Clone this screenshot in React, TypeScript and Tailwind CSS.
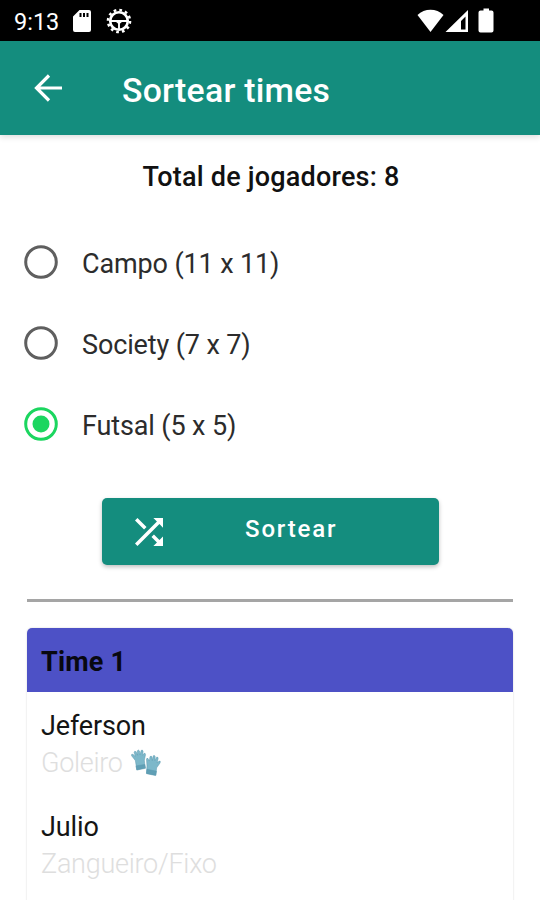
import React from 'react';

function StatusBar() {
  return (
    <div className="flex h-[41px] shrink-0 items-center bg-black pl-[14px] text-white">
      <span className="w-[46px] whitespace-nowrap text-[23.5px] leading-[28px] mt-[3px]">9:13</span>
      <svg className="ml-[13px] mt-px h-[22px] w-[18px]" viewBox="0 0 18 22" fill="currentColor">
        <path fillRule="evenodd" d="M6.5 0H16a2 2 0 0 1 2 2v18a2 2 0 0 1-2 2H2a2 2 0 0 1-2-2V6.500ZM6.500 3v4h2V3Zm3.500 0v4h2V3Zm3.500 0v4h2V3Z" />
      </svg>
      <svg className="ml-[15px] h-[26px] w-[26px]" viewBox="-13 -13 26 26" fill="none" stroke="currentColor">
        <circle r="8.800" strokeWidth="2.600" />
        <circle r="11" strokeWidth="2.600" strokeDasharray="2.700 3.060" />
        <path d="M-8.500 0h17M0 0v9" strokeWidth="1.900" />
        <path d="M-4 0h8L0 3.500Z" fill="currentColor" stroke="none" />
      </svg>
      <svg className="ml-auto mr-[45px] h-[26px] w-[78px]" viewBox="417 7.500 78 26" fill="currentColor">
        <path d="M417.500 14.500C424.500 7.500 436.500 7.500 443.500 14.500L430.500 31.500Z" />
        <path fillRule="evenodd" d="M468 9.500V31.500H445.500ZM465.500 16L461 20.500V29H465.500Z" />
        <path d="M483.500 8h5.500v2h2.500a2 2 0 0 1 2 2v18a2 2 0 0 1-2 2h-11a2 2 0 0 1-2-2V12a2 2 0 0 1 2-2h3Z" />
      </svg>
    </div>
  );
}

function Radio({ label, checked }: { label: string; checked?: boolean }) {
  return (
    <label className="flex h-[81px] items-center">
      <svg className={checked ? 'mb-px h-[34px] w-[34px] text-[#1bd65f]' : 'mb-px h-[34px] w-[34px] text-[#5f5f5f]'} viewBox="0 0 34 34" fill="none">
        <circle cx="17" cy="17" r="15.300" stroke="currentColor" strokeWidth="3" />
        {checked && <circle cx="17" cy="17" r="8.500" fill="currentColor" />}
      </svg>
      <span className="ml-[24px] mt-[3px] whitespace-nowrap text-[27px] leading-[32px] tracking-[-0.130px] text-[#2c2c2c]">{label}</span>
    </label>
  );
}

function Gloves() {
  return (
    <svg className="ml-[8px] h-[28px] w-[30px]" viewBox="0 0 31 28">
      <g stroke="#5797ae" strokeWidth=".5" strokeLinejoin="round">
        <path d="M4.500 11.500L.6 6.500Q0 4.500 2 5L4.500 7.200L3.200 3Q3.600 1 5.300 2.400L6.800 6L6.500 1.500Q7.500-.4 8.700 1.500L9.300 5.500L10.500 1Q12-.2 12.500 2L12 6L13.600 4Q15 3.500 15 5.500L13.800 11L14.500 19L6 21Z" fill="#7db8ca" />
        <path d="M5.200 17L14.300 15.500L15 19.500L6 21.300Z" fill="#609fb5" />
      </g>
      <g stroke="#5797ae" strokeWidth=".5" strokeLinejoin="round">
        <path d="M16.500 17L16 10Q16.800 7.800 18 10L19 12L19.600 7.500Q21 6 21.700 8L22 11.500L23 6.500Q24.500 5.500 25 7.500L24.700 11.500L26.500 8Q28.300 7.500 28 9.500L27 14L29 12Q31 11.500 30 14L26.500 19L25.600 26.500L16 24.500Z" fill="#7db8ca" />
        <path d="M16.500 20.500L26.300 22.500L25.500 27L16 25Z" fill="#609fb5" />
      </g>
    </svg>
  );
}

export default function App() {
  return (
    <div className="flex h-[900px] w-[540px] flex-col overflow-hidden bg-white font-[Roboto,sans-serif]">
      <StatusBar />
      <header className="flex h-[94px] shrink-0 items-center bg-[#148d7e] pl-[34px] text-white shadow-[0_2px_6px_rgba(0,0,0,0.14)]">
        <svg className="h-[28px] w-[28px]" viewBox="0 0 28 28" fill="none" stroke="currentColor" strokeWidth="3.200">
          <path d="M28 14H2.500M15 1.500L2.500 14L15 26.500" />
        </svg>
        <h1 className="ml-[60px] mt-[6px] whitespace-nowrap text-[33.750px] font-medium leading-[40px] tracking-[0.260px]">Sortear times</h1>
      </header>
      <main className="flex flex-col">
        <h2 className="mt-[26px] h-[32px] whitespace-nowrap pl-[2px] text-center text-[27px] font-medium leading-[32px] tracking-[0.200px] text-[#111]">Total de jogadores: 8</h2>
        <div className="mt-[29px] flex flex-col pl-[24px]">
          <Radio label="Campo (11 x 11)" />
          <Radio label="Society (7 x 7)" />
          <Radio label="Futsal (5 x 5)" checked />
        </div>
        <button className="ml-[102px] mt-[33px] flex h-[67px] w-[337px] items-center rounded-[5px] bg-[#148d7e] pl-[33px] text-white shadow-[0_2px_4px_rgba(0,0,0,0.25)]">
          <svg className="h-[28px] w-[28px]" viewBox="4 4 16 16" fill="currentColor">
            <path d="M10.590 9.170 5.410 4 4 5.410l5.170 5.170 1.420-1.410zM14.500 4l2.040 2.040L4 18.590 5.410 20 17.960 7.460 20 9.500V4h-5.500zm.33 9.410-1.410 1.410 3.130 3.130L14.500 20H20v-5.500l-2.040 2.040-3.130-3.130z" />
          </svg>
          <span className="mb-[5px] ml-[82px] text-[24px] font-medium leading-[28px] tracking-[1.850px]">Sortear</span>
        </button>
        <hr className="mx-[27px] mt-[34px] h-[3px] border-0 bg-[#a5a5a5]" />
        <section className="mx-[27px] mt-[26px] h-[300px] rounded-t-[5px] shadow-[0_0_2px_rgba(0,0,0,0.18)]">
          <div className="flex h-[64px] items-center rounded-t-[5px] bg-[#4d51c6] pl-[14px] text-[27px] font-bold leading-[32px] text-[#080810]">
            <span className="mt-[3px] tracking-[0.200px]">Time 1</span>
          </div>
          <div className="flex flex-col pl-[14px] pt-[18px] text-[27px] leading-[32px]">
            <span className="tracking-[-0.150px] text-[#151515]">Jeferson</span>
            <div className="mt-[5px] flex h-[32px] items-center font-light text-[#dedede]">
              <span className="tracking-[-0.300px]">Goleiro</span>
              <Gloves />
            </div>
            <span className="mt-[32px] tracking-[-0.100px] text-[#151515]">Julio</span>
            <span className="mt-[5px] font-light tracking-[-0.260px] text-[#dedede]">Zangueiro/Fixo</span>
          </div>
        </section>
      </main>
    </div>
  );
}
